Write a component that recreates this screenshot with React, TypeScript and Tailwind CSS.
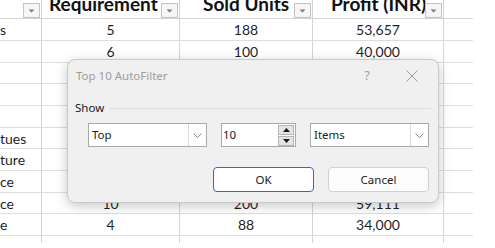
import React from 'react';

// Spreadsheet column widths (px, incl. right border)
const cols = [42, 138, 133, 131, 29];

interface Row {
  h: number;
  cells: string[];
}

const rows: Row[] = [
  { h: 22, cells: ['s', '5', '188', '53,657', ''] },
  { h: 22, cells: ['', '6', '100', '40,000', ''] },
  { h: 21, cells: ['', '', '', '', ''] },
  { h: 22, cells: ['', '', '', '', ''] },
  { h: 22, cells: ['', '', '', '', ''] },
  { h: 21, cells: ['tues', '', '', '', ''] },
  { h: 22, cells: ['ture', '', '', '', ''] },
  { h: 22, cells: ['ce', '', '', '', ''] },
  { h: 21, cells: ['ce', '10', '200', '59,111', ''] },
  { h: 22, cells: ['e', '4', '88', '34,000', ''] },
];

const FilterButton = () => (
  <div className="absolute right-[1px] top-[3px] z-10 flex h-[15px] w-[17px] items-center justify-center border border-[#c3c3c3] bg-[#f6f6f6]">
    <svg width="7" height="4" viewBox="0 0 7 4">
      <path d="M0.5 0.5 L6.5 0.5 L3.5 3.5 Z" fill="#7b7b7b" />
    </svg>
  </div>
);

const Chevron = () => (
  <svg width="9" height="5" viewBox="0 0 9 5">
    <path d="M0.5 0.5 L4.5 4.5 L8.5 0.5" fill="none" stroke="#8a8a8a" strokeWidth="1" />
  </svg>
);

const Select: React.FC<{ value: string }> = ({ value }) => (
  <div className="flex h-[24px] w-[119px] border border-[#a9a9a9] bg-white">
    <div className="flex flex-1 items-center pl-[3px] text-[11.5px] text-[#1a1a1a]">{value}</div>
    <div className="flex w-[18px] items-center justify-center border-l border-[#dadada]">
      <Chevron />
    </div>
  </div>
);

export default function App() {
  const headerFont = { fontFamily: 'Lato, "Liberation Sans", sans-serif' };
  return (
    <div className="relative h-[248px] w-[495px] overflow-hidden bg-white" style={headerFont}>
      {/* Sheet */}
      <div className="flex w-[473px] flex-col">
        {/* Header row (titles run off the top edge, as in the sheet) */}
        <div className="flex h-[19px] border-b border-[#d4d4d4]">
          <div className="relative w-[42px] border-r border-[#d4d4d4]">
            <FilterButton />
          </div>
          <div className="relative w-[138px] overflow-hidden border-r border-[#d4d4d4]">
            <div className="absolute left-[7px] top-[-6px] whitespace-nowrap text-[19px] font-bold leading-[19px] text-[#111]">
              Requirement
            </div>
            <FilterButton />
          </div>
          <div className="relative w-[133px] overflow-hidden border-r border-[#d4d4d4]">
            <div className="absolute left-[23px] top-[-6px] whitespace-nowrap text-[19px] font-bold leading-[19px] text-[#111]">
              Sold Units
            </div>
            <FilterButton />
          </div>
          <div className="relative w-[131px] overflow-hidden border-r border-[#d4d4d4]">
            <div className="absolute left-[18px] top-[-6px] whitespace-nowrap text-[19px] font-bold leading-[19px] text-[#111]">
              Profit (INR)
            </div>
            <FilterButton />
          </div>
          <div className="w-[29px]" />
        </div>

        {/* Data rows */}
        {rows.map((r, i) => (
          <div key={i} className="flex border-b border-[#dedede]" style={{ height: r.h }}>
            {r.cells.map((c, j) => (
              <div
                key={j}
                className={
                  j === 0
                    ? 'flex items-center overflow-hidden border-r border-[#d4d4d4] text-[14px] text-[#1f1f1f]'
                    : j === 4
                    ? 'flex items-center'
                    : 'flex items-center justify-center border-r border-[#d4d4d4] text-[14px] text-[#1f1f1f]'
                }
                style={{ width: cols[j] }}
              >
                {c}
              </div>
            ))}
          </div>
        ))}
        <div className="flex h-[7px]">
          {cols.map((w, j) => (
            <div key={j} className={j < 4 ? 'border-r border-[#d4d4d4]' : ''} style={{ width: w }} />
          ))}
        </div>
      </div>

      {/* Top 10 AutoFilter dialog */}
      <div
        className="absolute left-[67px] top-[59px] flex h-[144px] w-[372px] flex-col rounded-[8px] border border-[#c9c9c9] bg-[#f0f0f0] shadow-[0_3px_12px_rgba(0,0,0,0.22)]"
        style={{ fontFamily: '"Noto Sans", "Open Sans", sans-serif' }}
      >
        <div className="flex h-[31px] items-center pl-[8px] text-[11.5px] text-[#9d9d9d]">
          <span className="flex-1">Top 10 AutoFilter</span>
          <span className="w-[20px] text-center text-[13px] text-[#a0a0a0]">?</span>
          <span className="ml-[29px] mr-[20px] flex w-[12px] items-center justify-center">
            <svg width="12" height="12" viewBox="0 0 12 12">
              <path d="M0.5 0.5 L11.5 11.5 M11.5 0.5 L0.5 11.5" stroke="#9a9a9a" strokeWidth="1" />
            </svg>
          </span>
        </div>

        <div className="flex flex-col px-[7px]">
          <div className="mt-[9px] flex h-[16px] items-center gap-[5px]">
            <span className="text-[11.5px] text-[#1a1a1a]">Show</span>
            <div className="h-px flex-1 bg-[#dcdcdc]" />
          </div>

          <div className="mt-[7px] flex gap-[14px] pl-[13px]">
            <Select value="Top" />
            <div className="flex h-[24px] w-[75px] items-center border border-[#a9a9a9] bg-white">
              <span className="flex-1 pl-[1px] text-[11.5px] text-[#1a1a1a]">10</span>
              <div className="mr-[1px] flex flex-col gap-[1px]">
                <div className="flex h-[10px] w-[16px] items-center justify-center border border-[#b4b4b4] bg-[#e4e4e4]">
                  <svg width="7" height="4" viewBox="0 0 7 4">
                    <path d="M0 4 L7 4 L3.5 0 Z" fill="#1a1a1a" />
                  </svg>
                </div>
                <div className="flex h-[10px] w-[16px] items-center justify-center border border-[#b4b4b4] bg-[#e4e4e4]">
                  <svg width="7" height="4" viewBox="0 0 7 4">
                    <path d="M0 0 L7 0 L3.5 4 Z" fill="#1a1a1a" />
                  </svg>
                </div>
              </div>
            </div>
            <Select value="Items" />
          </div>

          <div className="mt-[20px] flex justify-end gap-[14px] pr-[2px]">
            <button className="flex h-[25px] w-[101px] items-center justify-center rounded-[4px] border border-[#1a72c9] bg-white text-[11.5px] text-[#1a1a1a]">
              OK
            </button>
            <button className="flex h-[25px] w-[101px] items-center justify-center rounded-[4px] border border-[#d0d0d0] bg-[#fdfdfd] text-[11.5px] text-[#1a1a1a]">
              Cancel
            </button>
          </div>
        </div>
      </div>
    </div>
  );
}
